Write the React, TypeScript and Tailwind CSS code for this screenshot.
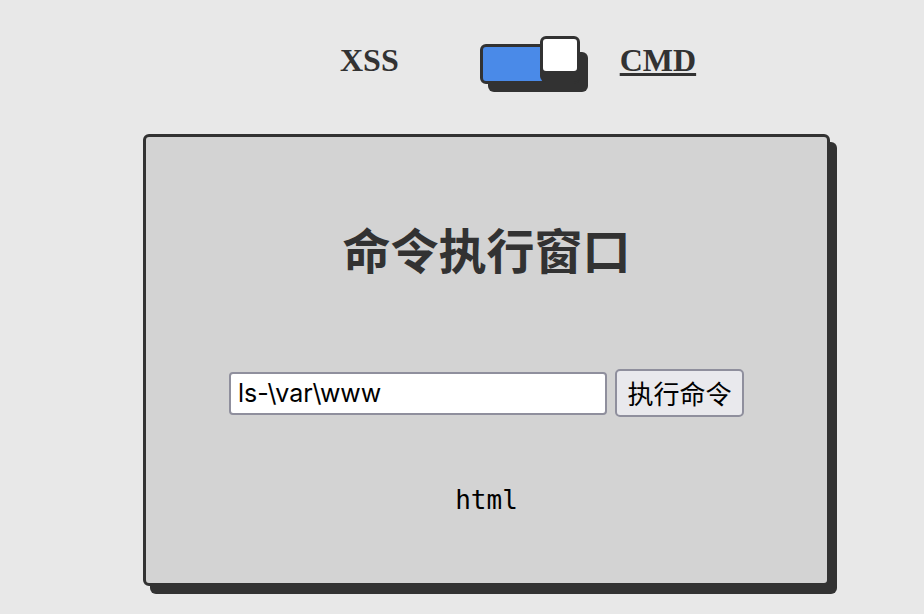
import React from 'react';

const ink = 'text-[#323232]';

const Toggle: React.FC = () => {
  return (
    <div className="relative w-[100px] h-[56px] pt-[8px]">
      <div className="w-[100px] h-[40px] rounded-[6px] border-[3px] border-[#323232] bg-[#4a8ae8] shadow-[8px_8px_0_#323232]" />
      <div className="absolute top-0 left-[60px] w-[40px] h-[38px] rounded-[6px] border-[3px] border-[#323232] bg-white shadow-[0_8px_0_#323232]" />
    </div>
  );
};

const App: React.FC = () => {
  return (
    <div className="min-h-screen bg-[#e8e8e8] pt-[36px] font-['Liberation_Sans',sans-serif]">
      <div className="flex items-start pl-[340px]">
        <span className={`mt-[4px] leading-[40px] text-[32px] font-bold ${ink} font-['Liberation_Serif',serif]`}>
          XSS
        </span>
        <div className="ml-[81px]">
          <Toggle />
        </div>
        <span className={`ml-[40px] mt-[4px] leading-[40px] text-[32px] font-bold underline ${ink} font-['Liberation_Serif',serif]`}>
          CMD
        </span>
      </div>

      <div className="ml-[143px] mt-[42px] w-[687px] h-[452px] rounded-[6px] border-[3px] border-[#323232] bg-[#d3d3d3] shadow-[7px_8px_0_#323232] flex flex-col items-center">
        <h1 className={`mt-[92px] leading-[48px] text-[48px] font-bold ${ink} font-['Liberation_Serif','Noto_Sans_CJK_SC',serif]`}>
          命令执行窗口
        </h1>
        <div className="mt-[92px] flex items-center gap-[8px] h-[48px]">
          <input
            type="text"
            defaultValue="ls-\var\www"
            className="w-[378px] h-[43px] rounded-[4px] border-2 border-[#8f8f9d] bg-white px-[7px] text-[25px] text-black font-['Inter','Noto_Sans_CJK_SC',sans-serif] outline-none"
          />
          <button className="h-[48px] w-[129px] rounded-[5px] border-2 border-[#8f8f9d] bg-[#e9e9ed] text-[26px] text-black font-['Noto_Sans_CJK_SC',sans-serif] leading-none">
            执行命令
          </button>
        </div>
        <div className="mt-[67px] leading-[32px] text-[26px] text-black font-['DejaVu_Sans_Mono',monospace]">
          html
        </div>
      </div>
    </div>
  );
};

export default App;
